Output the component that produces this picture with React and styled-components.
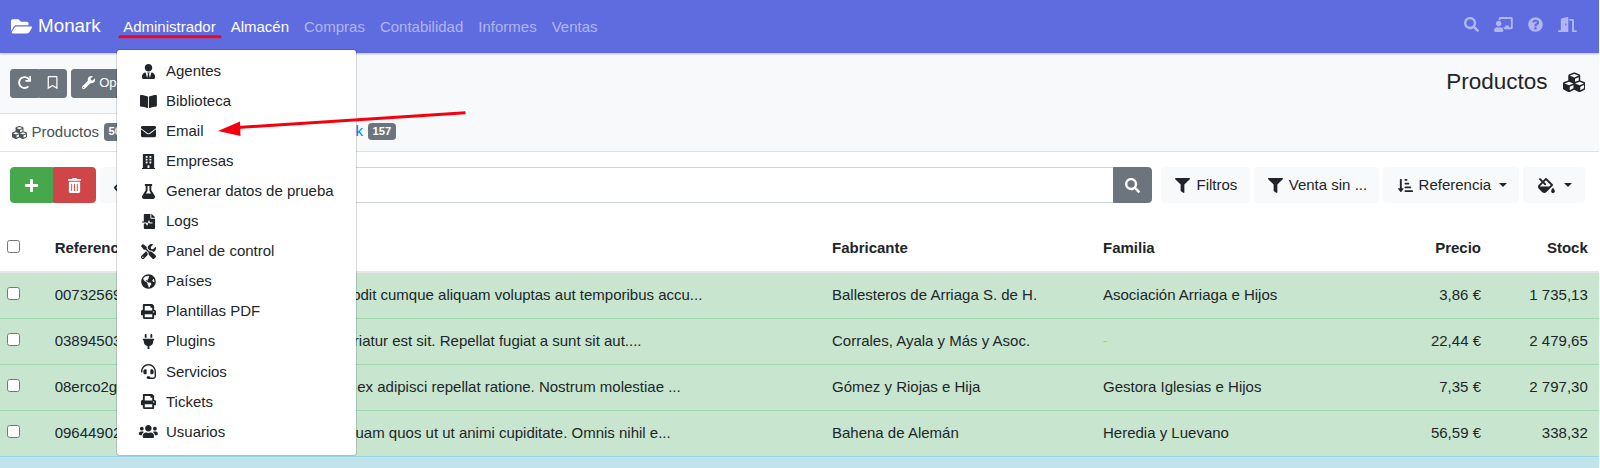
import React from "react";
import styled, { createGlobalStyle } from "styled-components";
import {
  FaFolderOpen,
  FaSearch,
  FaChalkboardTeacher,
  FaQuestionCircle,
  FaDoorOpen,
  FaUserTie,
  FaBookOpen,
  FaEnvelope,
  FaBuilding,
  FaFlask,
  FaFileMedicalAlt,
  FaTools,
  FaGlobeAmericas,
  FaPrint,
  FaPlug,
  FaHeadset,
  FaUsers,
  FaRedo,
  FaRegBookmark,
  FaWrench,
  FaCubes,
  FaPlus,
  FaTrashAlt,
  FaEraser,
  FaFilter,
  FaSortAmountDownAlt,
  FaFillDrip,
} from "react-icons/fa";

const GlobalStyle = createGlobalStyle`
  html, body {
    margin: 0;
    height: 468px;
    overflow: hidden;
    background: #fff;
    font-family: "Liberation Sans", Arial, sans-serif;
    font-size: 15px;
    line-height: 1.5;
    color: #212529;
  }
  * {
    box-sizing: border-box;
  }
  svg {
    flex: none;
  }
`;

// react-icons draws every glyph in a 1em square, the wide ones need their real width
const FolderIcon = styled(FaFolderOpen)`
  width: 1.125em;
`;
const BookIcon = styled(FaBookOpen)`
  width: 1.125em;
`;
const FillIcon = styled(FaFillDrip)`
  width: 1.125em;
`;
const BoardIcon = styled(FaChalkboardTeacher)`
  width: 1.25em;
`;
const DoorIcon = styled(FaDoorOpen)`
  width: 1.25em;
`;
const UsersIcon = styled(FaUsers)`
  width: 1.25em;
`;

const Page = styled.div`
  position: relative;
  width: 1599px;
  height: 468px;
  overflow: hidden;
`;

const Navbar = styled.nav`
  display: flex;
  align-items: center;
  height: 53px;
  padding: 0 15px 0 11px;
  background: #5f6ce0;
  box-shadow: 0 1px 2px rgba(0, 0, 0, 0.25);
  position: relative;
`;

const Brand = styled.a`
  display: flex;
  align-items: center;
  gap: 6px;
  margin: -1px 15px 0 0;
  font-size: 18.75px;
  color: #fff;
`;

const NavLink = styled.a`
  display: flex;
  align-items: center;
  padding: 7.5px;
  margin-top: 1px;
  color: ${(p) => (p.$active ? "#fff" : "rgba(255, 255, 255, 0.5)")};
`;

const NavRight = styled.div`
  display: flex;
  margin: -5px 0 0 auto;
`;

const Band = styled.div`
  display: flex;
  align-items: center;
  height: 60px;
  padding: 0 14px 0 10px;
  background: #f8f9fa;
`;

const BtnGroup = styled.div`
  display: flex;
  margin-right: 4px;
`;

const SmallBtn = styled.button`
  display: flex;
  align-items: center;
  justify-content: ${(p) => (p.$label ? "flex-start" : "center")};
  gap: 4px;
  width: ${(p) => (p.$label ? "auto" : "28.5px")};
  height: 29px;
  padding: ${(p) => (p.$label ? "0 7.5px 0 10px" : "0")};
  border: 1px solid #6c757d;
  border-radius: ${(p) => p.$radius || "3px"};
  background: #6c757d;
  color: #fff;
  font: inherit;
  font-size: 13.125px;
`;

const Title = styled.h1`
  display: flex;
  align-items: center;
  gap: 15px;
  margin: -2px 0 0 auto;
  font-size: 22.5px;
  font-weight: 400;
  line-height: 1.5;
`;

const Tabs = styled.div`
  display: flex;
  height: 39px;
  background: #f8f9fa;
  border-bottom: 1px solid #dee2e6;
`;

const Tab = styled.a`
  display: flex;
  align-items: center;
  gap: 5px;
  height: 38px;
  min-width: ${(p) => p.$minWidth || "auto"};
  padding: 0 11px 1px 11.5px;
  color: ${(p) => (p.$active ? "#495057" : "#007bff")};
  background: ${(p) => (p.$active ? "#fff" : "transparent")};
  border-top: ${(p) => (p.$active ? "1px solid #dee2e6" : "0")};
`;

const Badge = styled.span`
  padding: 3px 4.5px;
  border-radius: 3.75px;
  background: #6c757d;
  color: #fff;
  font-size: 11.25px;
  font-weight: 700;
  line-height: 1;
`;

const Controls = styled.div`
  display: flex;
  align-items: stretch;
  height: 36px;
  margin: 15px 14px 22.6px 10px;
`;

const Btn = styled.button`
  display: flex;
  align-items: center;
  justify-content: center;
  gap: 4.17px;
  padding: 0 ${(p) => p.$pad || "11.25px"};
  border: 1px solid ${(p) => p.$bg || "#f8f9fa"};
  border-radius: ${(p) => p.$radius || "3.75px"};
  background: ${(p) => p.$bg || "#f8f9fa"};
  color: ${(p) => (p.$bg ? "#fff" : "#212529")};
  font: inherit;
  margin-left: ${(p) => p.$ml || "0"};
  white-space: nowrap;
`;

const Caret = styled.span`
  width: 0;
  height: 0;
  margin-left: 3.8px;
  border-top: 4.5px solid currentColor;
  border-left: 4.2px solid transparent;
  border-right: 4.2px solid transparent;
`;

const Fw = styled.span`
  display: inline-flex;
  justify-content: center;
  flex: none;
  width: 1.25em;
`;

const SearchInput = styled.input`
  flex: 1;
  min-width: 0;
  margin-left: 4px;
  padding: 0 11px;
  border: 1px solid #ced4da;
  border-right: 0;
  font: inherit;
  background: #fff;
`;

const Table = styled.table`
  width: 1599px;
  table-layout: fixed;
  border-collapse: collapse;
`;

const Th = styled.th`
  padding: 11.25px;
  border-bottom: 2px solid #e4e6e9;
  font-weight: 700;
  text-align: ${(p) => (p.$right ? "right" : "left")};
  white-space: nowrap;
`;

const Td = styled.td`
  padding: 11.25px;
  text-align: ${(p) => (p.$right ? "right" : "left")};
  white-space: nowrap;
  overflow: hidden;
`;

const CheckTh = styled(Th)`
  padding-left: 7px;
  padding-right: 0;
`;

const CheckTd = styled(Td)`
  padding-left: 7px;
  padding-right: 0;
`;

const Check = styled.input.attrs({ type: "checkbox" })`
  display: block;
  width: 13px;
  height: 13px;
  margin: -3px 0 0;
`;

const Row = styled.tr`
  background: ${(p) => (p.$info ? "#c1e3eb" : "#c8e6cf")};
  border-top: 1px solid ${(p) => (p.$info ? "#9dd5e6" : "#a3d6ae")};
`;

const Warning = styled.span`
  color: #ffc107;
`;

const Menu = styled.div`
  position: absolute;
  top: 49px;
  left: 116px;
  width: 240.5px;
  padding: 6px 0 7.5px;
  border: 1px solid rgba(0, 0, 0, 0.15);
  border-radius: 3.75px;
  background: #fff;
  background-clip: padding-box;
`;

const MenuItem = styled.a`
  display: flex;
  align-items: center;
  gap: 8.25px;
  height: 30.08px;
  padding-left: 22px;
  color: #212529;
`;

const Annotation = styled.svg`
  position: absolute;
  top: 0;
  left: 0;
  width: 1599px;
  height: 468px;
  pointer-events: none;
`;

const menuItems = [
  [FaUserTie, "Agentes"],
  [BookIcon, "Biblioteca"],
  [FaEnvelope, "Email"],
  [FaBuilding, "Empresas"],
  [FaFlask, "Generar datos de prueba"],
  [FaFileMedicalAlt, "Logs"],
  [FaTools, "Panel de control"],
  [FaGlobeAmericas, "Países"],
  [FaPrint, "Plantillas PDF"],
  [FaPlug, "Plugins"],
  [FaHeadset, "Servicios"],
  [FaPrint, "Tickets"],
  [UsersIcon, "Usuarios"],
];

const products = [
  {
    ref: "00732569",
    desc: "Sequi eveniet quia vel odit cumque aliquam voluptas aut temporibus accu...",
    maker: "Ballesteros de Arriaga S. de H.",
    family: "Asociación Arriaga e Hijos",
    price: "3,86 €",
    stock: "1 735,13",
  },
  {
    ref: "03894503",
    desc: "Sequi eveniet natus pariatur est sit. Repellat fugiat a sunt sit aut....",
    maker: "Corrales, Ayala y Más y Asoc.",
    family: null,
    price: "22,44 €",
    stock: "2 479,65",
  },
  {
    ref: "08erco2g",
    desc: "Sequi eveniet quia sed ex adipisci repellat ratione. Nostrum molestiae ...",
    maker: "Gómez y Riojas e Hija",
    family: "Gestora Iglesias e Hijos",
    price: "7,35 €",
    stock: "2 797,30",
  },
  {
    ref: "09644902",
    desc: "Sequi eveniet nulla aliquam quos ut ut animi cupiditate. Omnis nihil e...",
    maker: "Bahena de Alemán",
    family: "Heredia y Luevano",
    price: "56,59 €",
    stock: "338,32",
  },
];

const App = () => {
  return (
    <Page>
      <GlobalStyle />
      <Navbar>
        <Brand>
          <FolderIcon />
          Monark
        </Brand>
        <NavLink $active>Administrador</NavLink>
        <NavLink $active>Almacén</NavLink>
        <NavLink>Compras</NavLink>
        <NavLink>Contabilidad</NavLink>
        <NavLink>Informes</NavLink>
        <NavLink>Ventas</NavLink>
        <NavRight>
          <NavLink><FaSearch /></NavLink>
          <NavLink><BoardIcon /></NavLink>
          <NavLink><FaQuestionCircle /></NavLink>
          <NavLink><DoorIcon /></NavLink>
        </NavRight>
      </Navbar>

      <Band>
        <BtnGroup>
          <SmallBtn $radius="3px 0 0 3px"><FaRedo /></SmallBtn>
          <SmallBtn $radius="0 3px 3px 0"><FaRegBookmark /></SmallBtn>
        </BtnGroup>
        <SmallBtn $label><FaWrench />Opciones</SmallBtn>
        <Title>
          Productos
          <FaCubes />
        </Title>
      </Band>

      <Tabs>
        <Tab $active>
          <FaCubes />
          Productos
          <Badge>50</Badge>
        </Tab>
        <Tab $minWidth="177.5px">Variantes</Tab>
        <Tab>
          <span>Stock</span>
          <Badge>157</Badge>
        </Tab>
      </Tabs>

      <Controls>
        <Btn $bg="#46a74c" $pad="11px" $radius="3.75px 0 0 3.75px"><Fw><FaPlus /></Fw></Btn>
        <Btn $bg="#d04648" $pad="11px" $radius="0 3.75px 3.75px 0"><Fw><FaTrashAlt /></Fw></Btn>
        <Btn $ml="4px"><Fw><FaEraser /></Fw></Btn>
        <SearchInput />
        <Btn $bg="#6c757d" $radius="0 3.75px 3.75px 0"><FaSearch /></Btn>
        <Btn $ml="9px"><Fw><FaFilter /></Fw>Filtros</Btn>
        <Btn $ml="4px"><Fw><FaFilter /></Fw>Venta sin ...</Btn>
        <Btn $ml="4px"><Fw><FaSortAmountDownAlt /></Fw>Referencia<Caret /></Btn>
        <Btn $ml="4px" $pad="12.5px"><Fw><FillIcon /></Fw><Caret /></Btn>
      </Controls>

      <Table>
        <colgroup>
          <col style={{ width: 43.4 }} />
          <col style={{ width: 146.6 }} />
          <col style={{ width: 630.75 }} />
          <col style={{ width: 271 }} />
          <col style={{ width: 300 }} />
          <col style={{ width: 100.5 }} />
          <col style={{ width: 106.75 }} />
        </colgroup>
        <thead>
          <tr>
            <CheckTh><Check /></CheckTh>
            <Th>Referencia</Th>
            <Th>Descripción</Th>
            <Th>Fabricante</Th>
            <Th>Familia</Th>
            <Th $right>Precio</Th>
            <Th $right>Stock</Th>
          </tr>
        </thead>
        <tbody>
          {products.map((p) => (
            <Row key={p.ref}>
              <CheckTd><Check /></CheckTd>
              <Td>{p.ref}</Td>
              <Td>{p.desc}</Td>
              <Td>{p.maker}</Td>
              <Td>{p.family || <Warning>-</Warning>}</Td>
              <Td $right>{p.price}</Td>
              <Td $right>{p.stock}</Td>
            </Row>
          ))}
          <Row $info>
            <CheckTd><Check /></CheckTd>
            <Td colSpan={6}>&nbsp;</Td>
          </Row>
        </tbody>
      </Table>

      <Menu>
        {menuItems.map(([Icon, label]) => (
          <MenuItem key={label}>
            <Fw><Icon /></Fw>
            {label}
          </MenuItem>
        ))}
      </Menu>

      {/* marcas rojas hechas a mano sobre la captura */}
      <Annotation viewBox="0 0 1599 468">
        <path d="M120 36.8 L220 36.8" stroke="#ee0a1e" strokeWidth="3" strokeLinecap="round" />
        <path d="M465.5 112.7 L238 127.5" stroke="#f4000f" strokeWidth="3" />
        <path d="M218 131 L240 121.5 L240.5 136 Z" fill="#f4000f" />
      </Annotation>
    </Page>
  );
};

export default App;
